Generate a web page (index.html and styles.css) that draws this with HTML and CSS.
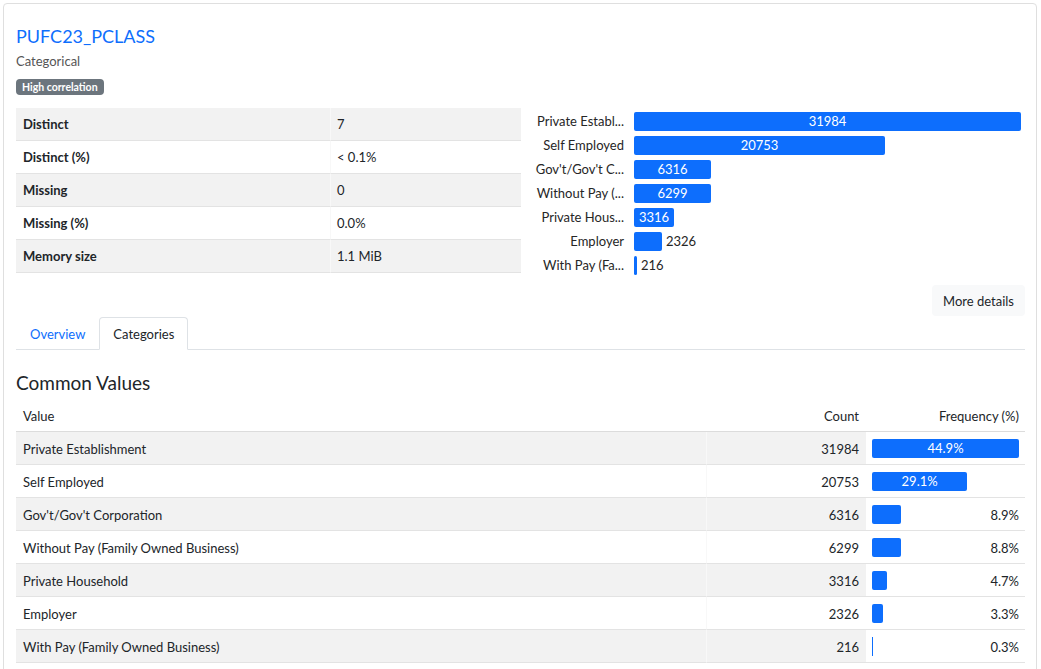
FILE: index.html
```html
<!DOCTYPE html>
<html>
<head>
<meta charset="utf-8">
<link rel="stylesheet" href="styles.css">
</head>
<body>
<div class="page">
  <div class="card">
    <h2 class="var-title">PUFC23_PCLASS</h2>
    <div class="var-type">Categorical</div>
    <div class="badges"><span class="badge">High correlation</span></div>

    <div class="overview-row">
      <table class="stats">
        <tr class="odd"><th>Distinct</th><td>7</td></tr>
        <tr><th>Distinct (%)</th><td>&lt; 0.1%</td></tr>
        <tr class="odd"><th>Missing</th><td>0</td></tr>
        <tr><th>Missing (%)</th><td>0.0%</td></tr>
        <tr class="odd"><th>Memory size</th><td>1.1 MiB</td></tr>
      </table>

      <div class="chart">
        <div class="c-label">Private Establ...</div>
        <div class="c-track"><div class="c-bar" style="width:387px">31984</div></div>
        <div class="c-label">Self Employed</div>
        <div class="c-track"><div class="c-bar" style="width:251px">20753</div></div>
        <div class="c-label">Gov't/Gov't C...</div>
        <div class="c-track"><div class="c-bar" style="width:77px">6316</div></div>
        <div class="c-label">Without Pay (...</div>
        <div class="c-track"><div class="c-bar" style="width:77px">6299</div></div>
        <div class="c-label">Private Hous...</div>
        <div class="c-track"><div class="c-bar" style="width:40px">3316</div></div>
        <div class="c-label">Employer</div>
        <div class="c-track"><div class="c-bar" style="width:28px"></div><span class="c-out">2326</span></div>
        <div class="c-label">With Pay (Fa...</div>
        <div class="c-track"><div class="c-bar" style="width:3px"></div><span class="c-out">216</span></div>
      </div>
    </div>

    <div class="actions"><button class="btn-details">More details</button></div>

    <ul class="tabs">
      <li class="tab">Overview</li>
      <li class="tab active">Categories</li>
    </ul>

    <h3 class="section-title">Common Values</h3>
    <table class="freq">
      <thead>
        <tr><th class="col-value">Value</th><th class="col-count">Count</th><th class="col-freq">Frequency (%)</th></tr>
      </thead>
      <tbody>
        <tr class="odd"><td class="col-value">Private Establishment</td><td class="col-count">31984</td><td class="col-freq"><div class="f-bar in" style="width:100%">44.9%</div></td></tr>
        <tr><td class="col-value">Self Employed</td><td class="col-count">20753</td><td class="col-freq"><div class="f-bar in" style="width:64.8%">29.1%</div></td></tr>
        <tr class="odd"><td class="col-value">Gov't/Gov't Corporation</td><td class="col-count">6316</td><td class="col-freq"><div class="f-wrap"><div class="f-bar" style="width:19.8%"></div><span>8.9%</span></div></td></tr>
        <tr><td class="col-value">Without Pay (Family Owned Business)</td><td class="col-count">6299</td><td class="col-freq"><div class="f-wrap"><div class="f-bar" style="width:19.7%"></div><span>8.8%</span></div></td></tr>
        <tr class="odd"><td class="col-value">Private Household</td><td class="col-count">3316</td><td class="col-freq"><div class="f-wrap"><div class="f-bar" style="width:10.4%"></div><span>4.7%</span></div></td></tr>
        <tr><td class="col-value">Employer</td><td class="col-count">2326</td><td class="col-freq"><div class="f-wrap"><div class="f-bar" style="width:7.3%"></div><span>3.3%</span></div></td></tr>
        <tr class="odd"><td class="col-value">With Pay (Family Owned Business)</td><td class="col-count">216</td><td class="col-freq"><div class="f-wrap"><div class="f-bar thin" style="width:1px"></div><span>0.3%</span></div></td></tr>
      </tbody>
    </table>
  </div>
</div>
</body>
</html>
```

FILE: styles.css
```css
* { box-sizing: border-box; }
body {
  margin: 0;
  font-family: Lato, "Noto Sans", sans-serif;
  font-size: 13px;
  line-height: 18px;
  color: #212529;
  background: #fff;
}
.page { padding: 3px 4px 0 3px; }
.card {
  border: 1px solid #dfdfdf;
  border-radius: 4px;
  padding: 20px 11px 12px 12px;
}
.var-title {
  margin: 0;
  font-size: 18px;
  line-height: 24px;
  font-weight: 400;
  color: #0d6efd;
}
.var-type {
  margin-top: 4px;
  line-height: 18px;
  color: #555;
}
.badges { margin-top: 9px; display: flex; }
.badge {
  display: inline-block;
  background: #6c757d;
  color: #fff;
  font-size: 10.5px;
  font-weight: 700;
  line-height: 16px;
  height: 16px;
  padding: 0 6px;
  border-radius: 4px;
}
.overview-row {
  margin-top: 13px;
  display: grid;
  grid-template-columns: 505px 1fr;
  align-items: start;
}
.stats {
  width: 100%;
  border-collapse: separate;
  border-spacing: 0;
}
.stats th, .stats td {
  height: 33px;
  padding: 0 7px;
  text-align: left;
  border-bottom: 1px solid #e3e3e3;
}
.stats th { font-weight: 700; width: 314px; }
.stats td { border-left: 1px solid #f8f8f8; padding-left: 6px; }
.stats tr.odd th, .stats tr.odd td { background: #f2f2f2; }

.chart {
  padding-top: 4px;
  display: grid;
  grid-template-columns: 103px 1fr;
  column-gap: 10px;
  row-gap: 5px;
}
.c-label {
  text-align: right;
  line-height: 19px;
  height: 19px;
  color: #262626;
  white-space: nowrap;
}
.c-track {
  display: flex;
  align-items: center;
  height: 19px;
}
.c-bar {
  height: 19px;
  background: #0d6efd;
  color: #fff;
  border-radius: 2px;
  text-align: center;
  line-height: 19px;
  flex: none;
}
.c-out { margin-left: 4px; line-height: 19px; color: #262626; }

.actions {
  margin-top: 10px;
  display: flex;
  justify-content: flex-end;
}
.btn-details {
  font: inherit;
  color: #212529;
  background: #f8f9fa;
  border: none;
  border-radius: 4px;
  height: 31px;
  padding: 0 11px;
}
.tabs {
  list-style: none;
  margin: 1px 0 0;
  padding: 0;
  display: flex;
  border-bottom: 1px solid #dee2e6;
}
.tab {
  height: 33px;
  line-height: 32px;
  padding: 0 13px;
  margin-bottom: -1px;
  border: 1px solid transparent;
  border-radius: 4px 4px 0 0;
  color: #0d6efd;
}
.tab.active {
  color: #212529;
  background: #fff;
  border-color: #dee2e6 #dee2e6 #fff;
}
.section-title {
  margin: 22px 0 5px;
  font-size: 19px;
  line-height: 22px;
  font-weight: 400;
  color: #212529;
}
.freq {
  width: 100%;
  border-collapse: separate;
  border-spacing: 0;
}
.freq th, .freq td {
  height: 33px;
  padding: 2px 7px 0;
  border-bottom: 1px solid #e3e3e3;
}
.freq th { font-weight: 400; border-bottom: 1px solid #dcdcdc; padding-top: 1px; }
.freq .col-value { text-align: left; }
.freq .col-count { width: 160px; text-align: right; }
.freq td.col-count { border-left: 1px solid #f8f8f8; }
.freq .col-freq { width: 159px; text-align: right; padding: 1px 6px 0; }
.freq tr.odd td { background: #f2f2f2; }
.freq tbody tr:not(.odd) td.col-freq, .freq tr.odd td.col-freq { background: #fff; }
.f-bar {
  height: 19px;
  background: #0d6efd;
  border-radius: 2px;
  color: #fff;
  line-height: 19px;
  text-align: center;
}
.f-wrap {
  display: flex;
  align-items: center;
  justify-content: space-between;
}
.f-bar.thin { border-radius: 0; }
```
